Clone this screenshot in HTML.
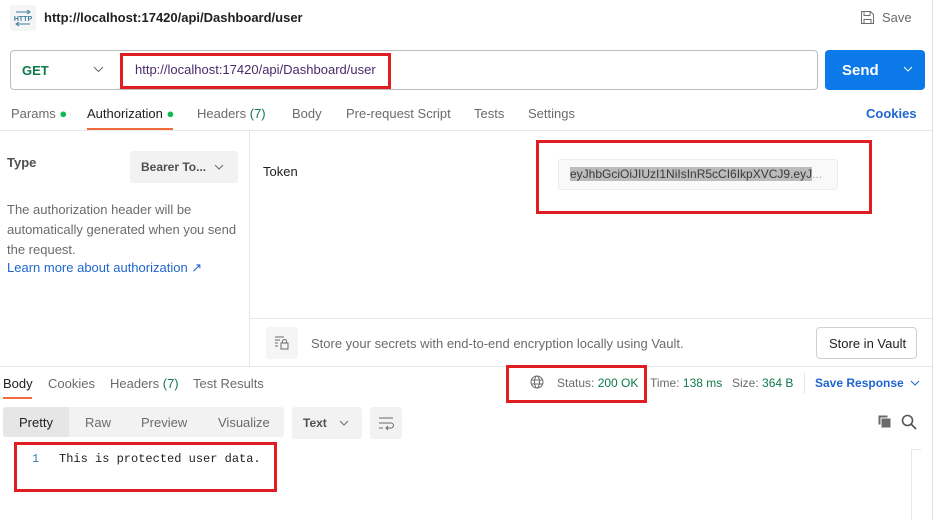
<!DOCTYPE html>
<html><head><meta charset="utf-8"><style>
*{box-sizing:border-box;margin:0;padding:0}
body{width:938px;height:520px;background:#fff;font-family:"Liberation Sans",Arial,sans-serif;font-size:13px;color:#212121;position:relative;overflow:hidden}
.a{position:absolute;white-space:nowrap}
.g{color:#6b6b6b}
.red{position:absolute;border:3px solid #e01e22}
.line{position:absolute;background:#e6e6e6}
</style></head><body>
<div class="line" style="left:932px;top:0;width:1px;height:520px;background:#e0e0e0"></div>
<div class="a" style="left:10px;top:5px;width:26px;height:26px;background:#f5f5f5;border-radius:3px"></div>
<svg class="a" style="left:13px;top:8px" width="20" height="20" viewBox="0 0 20 20"><path d="M3 4h14M14 2l3 2-3 2M17 16H3M6 14l-3 2 3 2" stroke="#3b7ea1" fill="none" stroke-width="1"/><text x="10" y="13" font-size="7" font-family="Liberation Sans" fill="#3b7ea1" text-anchor="middle" font-weight="bold">HTTP</text></svg>
<div class="a" style="left:44px;top:10px;font-weight:bold;font-size:13px">http://localhost:17420/api/Dashboard/user</div>
<svg class="a" style="left:860px;top:10px" width="15" height="15" viewBox="0 0 15 15"><path d="M1.5 1.5h9l3 3v9h-12z M4 1.5v4h6v-4 M4 13.5v-4h7v4" stroke="#6b6b6b" fill="none"/></svg>
<div class="a g" style="left:882px;top:10px">Save</div>
<div class="a" style="left:10px;top:50px;width:808px;height:40px;border:1px solid #bdbdbd;border-radius:4px"></div>
<div class="a" style="left:22px;top:63px;font-weight:bold;color:#0f7a4b">GET</div>
<svg class="a" style="left:93px;top:66px" width="11" height="8"><path d="M1 1l4.5 4.5L10 1" stroke="#6b6b6b" fill="none"/></svg>
<div class="red" style="left:120px;top:53px;width:271px;height:36px"></div>
<div class="a" style="left:135px;top:62px;color:#4a2a6a">http://localhost:17420/api/Dashboard/user</div>
<div class="a" style="left:825px;top:50px;width:100px;height:40px;background:#0b79e8;border-radius:4px"></div>
<div class="a" style="left:842px;top:62px;color:#fff;font-weight:bold;font-size:15px">Send</div>
<svg class="a" style="left:903px;top:66px" width="10" height="7"><path d="M1 1l4 4 4-4" stroke="#fff" fill="none"/></svg>
<div class="a g" style="left:11px;top:106px">Params <span style="color:#0cbb52">●</span></div>
<div class="a" style="left:87px;top:106px;color:#212121">Authorization <span style="color:#0cbb52">●</span></div>
<div class="a" style="left:87px;top:128px;width:86px;height:2px;background:#f26b3a"></div>
<div class="a g" style="left:197px;top:106px">Headers <span style="color:#0f7a4b">(7)</span></div>
<div class="a g" style="left:292px;top:106px">Body</div>
<div class="a g" style="left:346px;top:106px">Pre-request Script</div>
<div class="a g" style="left:474px;top:106px">Tests</div>
<div class="a g" style="left:528px;top:106px">Settings</div>
<div class="a" style="left:866px;top:106px;color:#1f66d1;font-weight:bold">Cookies</div>
<div class="line" style="left:0;top:130px;width:932px;height:1px"></div>
<div class="line" style="left:249px;top:131px;width:1px;height:235px"></div>
<div class="a" style="left:7px;top:155px;font-weight:bold;color:#505050">Type</div>
<div class="a" style="left:130px;top:151px;width:108px;height:32px;background:#f2f2f2;border-radius:3px"></div>
<div class="a" style="left:141px;top:160px;font-weight:bold;color:#505050;font-size:12px">Bearer To...</div>
<svg class="a" style="left:214px;top:164px" width="10" height="7"><path d="M1 1l4 4 4-4" stroke="#6b6b6b" fill="none"/></svg>
<div class="a g" style="left:7px;top:200px;line-height:20px;white-space:normal;width:240px">The authorization header will be<br>automatically generated when you send<br>the request.</div>
<div class="a" style="left:7px;top:260px;color:#1f66d1">Learn more about authorization ↗</div>
<div class="a" style="left:263px;top:164px">Token</div>
<div class="red" style="left:536px;top:140px;width:336px;height:74px"></div>
<div class="a" style="left:558px;top:159px;width:280px;height:31px;background:#f9f9f9;border:1px solid #ececec;border-radius:3px"></div>
<div class="a" style="left:570px;top:167px;color:#3a3a3a;font-size:12px"><span style="background:#bcbcbc">eyJhbGciOiJIUzI1NiIsInR5cCI6IkpXVCJ9.eyJ</span><span style="color:#aaa">...</span></div>
<div class="line" style="left:249px;top:318px;width:683px;height:1px"></div>
<div class="a" style="left:266px;top:327px;width:32px;height:32px;background:#f5f5f5;border-radius:3px"></div>
<svg class="a" style="left:274px;top:335px" width="16" height="16" viewBox="0 0 16 16"><path d="M1 2h9M1 5h5M1 8h3M1 11h3" stroke="#6b6b6b"/><rect x="7" y="8" width="7" height="6" stroke="#6b6b6b" fill="none"/><path d="M8.5 8V6.5a2 2 0 0 1 4 0V8" stroke="#6b6b6b" fill="none"/></svg>
<div class="a g" style="left:311px;top:336px">Store your secrets with end-to-end encryption locally using Vault.</div>
<div class="a" style="left:816px;top:327px;width:101px;height:32px;border:1px solid #d0d0d0;border-radius:4px"></div>
<div class="a" style="left:829px;top:336px">Store in Vault</div>
<div class="line" style="left:0;top:366px;width:932px;height:1px"></div>
<div class="a" style="left:3px;top:376px">Body</div>
<div class="a" style="left:3px;top:397px;width:29px;height:2px;background:#f26b3a"></div>
<div class="a g" style="left:48px;top:376px">Cookies</div>
<div class="a g" style="left:110px;top:376px">Headers <span style="color:#0f7a4b">(7)</span></div>
<div class="a g" style="left:193px;top:376px">Test Results</div>
<div class="red" style="left:506px;top:365px;width:141px;height:38px"></div>
<svg class="a" style="left:530px;top:375px" width="14" height="14" viewBox="0 0 14 14"><circle cx="7" cy="7" r="6" stroke="#6b6b6b" fill="none"/><ellipse cx="7" cy="7" rx="2.5" ry="6" stroke="#6b6b6b" fill="none"/><path d="M1 5h12M1 9h12" stroke="#6b6b6b"/></svg>
<div class="a g" style="left:557px;top:376px;font-size:12px">Status: <span style="color:#0f7a4b">200 OK</span></div>
<div class="a g" style="left:650px;top:376px;font-size:12px">Time: <span style="color:#0f7a4b">138 ms</span></div>
<div class="a g" style="left:732px;top:376px;font-size:12px">Size: <span style="color:#0f7a4b">364 B</span></div>
<div class="line" style="left:804px;top:372px;width:1px;height:22px"></div>
<div class="a" style="left:815px;top:376px;color:#1f66d1;font-weight:bold;font-size:12px">Save Response</div>
<svg class="a" style="left:910px;top:380px" width="10" height="7"><path d="M1 1l4 4 4-4" stroke="#1f66d1" fill="none"/></svg>
<div class="a" style="left:3px;top:407px;width:281px;height:30px;background:#f2f2f2;border-radius:3px"></div>
<div class="a" style="left:3px;top:407px;width:66px;height:30px;background:#e6e6e6;border-radius:3px 0 0 3px"></div>
<div class="a" style="left:19px;top:415px">Pretty</div>
<div class="a g" style="left:85px;top:415px">Raw</div>
<div class="a g" style="left:141px;top:415px">Preview</div>
<div class="a g" style="left:218px;top:415px">Visualize</div>
<div class="a" style="left:292px;top:407px;width:70px;height:32px;background:#f2f2f2;border-radius:3px"></div>
<div class="a" style="left:303px;top:416px;font-weight:bold;color:#505050;font-size:12px">Text</div>
<svg class="a" style="left:339px;top:420px" width="10" height="7"><path d="M1 1l4 4 4-4" stroke="#6b6b6b" fill="none"/></svg>
<div class="a" style="left:370px;top:407px;width:32px;height:32px;background:#f2f2f2;border-radius:3px"></div>
<svg class="a" style="left:378px;top:415px" width="16" height="16" viewBox="0 0 16 16"><path d="M1 3h14M1 8h12a2.5 2.5 0 0 1 0 5H8M10 11l-2 2 2 2M1 13h4" stroke="#6b6b6b" fill="none"/></svg>
<svg class="a" style="left:878px;top:415px" width="14" height="14"><rect x="0.5" y="0.5" width="9" height="9" fill="#6b6b6b"/><rect x="3" y="3" width="10" height="10" fill="#6b6b6b" stroke="#fff"/></svg>
<svg class="a" style="left:901px;top:414px" width="16" height="16"><circle cx="6.5" cy="6.5" r="5" stroke="#555" stroke-width="1.6" fill="none"/><path d="M10 10l5 5" stroke="#555" stroke-width="1.8"/></svg>
<div class="red" style="left:14px;top:442px;width:263px;height:50px"></div>
<div class="a" style="left:32px;top:452px;font-family:'Liberation Mono',monospace;font-size:12px;color:#3b7ea1">1</div>
<div class="a" style="left:59px;top:452px;font-family:'Liberation Mono',monospace;font-size:12px;color:#212121">This is protected user data.</div>
<div class="line" style="left:911px;top:449px;width:1px;height:71px"></div>
<div class="line" style="left:911px;top:449px;width:10px;height:1px"></div>
</body></html>
